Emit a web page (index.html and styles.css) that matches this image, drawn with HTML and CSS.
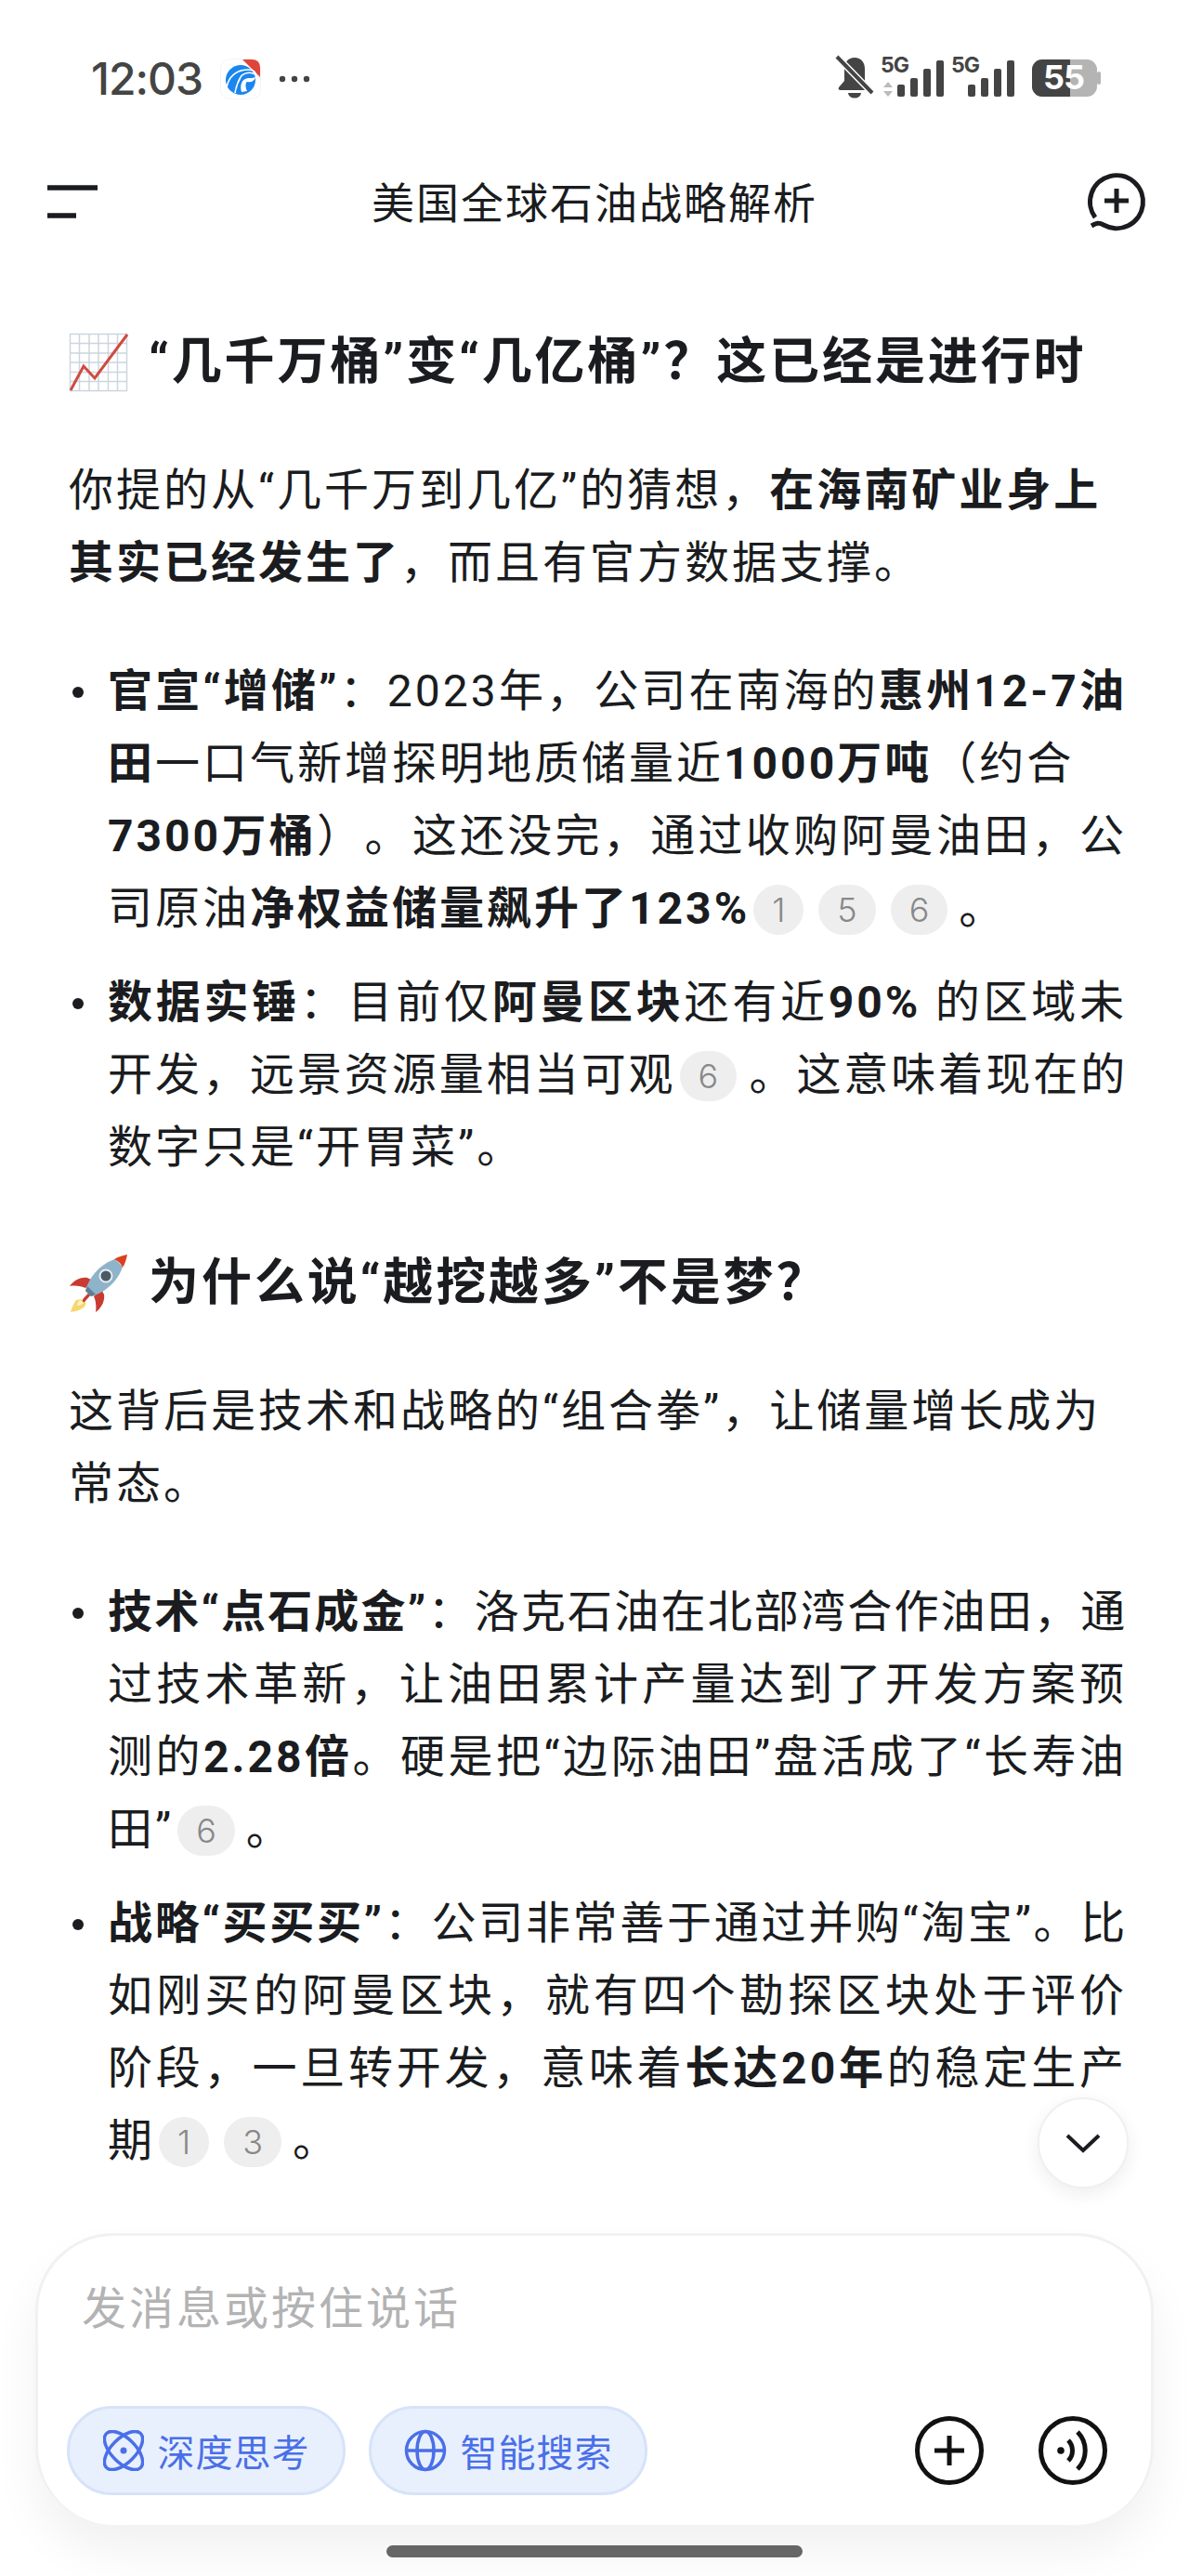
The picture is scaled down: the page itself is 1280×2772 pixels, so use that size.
FILE: index.html
```html
<!DOCTYPE html>
<html lang="zh-CN">
<head>
<meta charset="utf-8">
<title>美国全球石油战略解析</title>
<link rel="stylesheet" href="styles.css">
</head>
<body>
<div class="app">
  <div class="status">
    <div class="status-left">
      <span class="time">12:03</span>
      <svg class="app-logo" width="44" height="44" viewBox="0 0 44 44">
        <rect x="0.5" y="0.5" width="43" height="43" rx="10" fill="#fff" stroke="#f4f4f4"/>
        <path d="M24 1h10q9 0 9 9v10z" fill="#e0453a"/>
        <circle cx="22" cy="23" r="16" fill="#1a86ee"/>
        <path d="M7 31C9 20 17 12 30 12c5 0 8 2 8 5-5-3-13-2-16 3-3 5-5 11-6 17" fill="none" stroke="#fff" stroke-width="1.6"/>
        <path d="M23 36c-2-7 0-14 7-15 3 0 6 0 8-1-1 4-4 6-9 5-2 1-2 6 0 10z" fill="#fff"/>
      </svg>
      <svg class="dots" width="34" height="8" viewBox="0 0 34 8"><circle cx="4" cy="4" r="3.2"/><circle cx="17" cy="4" r="3.2"/><circle cx="30" cy="4" r="3.2"/></svg>
    </div>
    <svg class="status-right" width="300" height="64" viewBox="900 50 300 64">
      <path d="M921 62c-7 0-11 5-11 12v13l-6 7c-1 2 0 3 2 3h30c2 0 3-1 2-3l-6-7V74c0-7-4-12-11-12z" fill="#444"/>
      <path d="M914 100a7 5.500 0 0 0 14 0z" fill="#444"/>
      <path d="M902 61l37 38" stroke="#fff" stroke-width="7"/>
      <path d="M902 61l38 39" stroke="#444" stroke-width="4"/>
      <text x="949" y="78" class="sig">5G</text>
      <path d="M957 88l5 6h-10zM957 104l5-6h-10z" fill="#bbb"/>
      <g fill="#444">
        <rect x="967" y="91" width="8" height="13" rx="2"/><rect x="981" y="84" width="8" height="20" rx="2"/><rect x="995" y="74" width="8" height="30" rx="2"/><rect x="1009" y="65" width="8" height="39" rx="2"/>
        <rect x="1043" y="91" width="8" height="13" rx="2"/><rect x="1057" y="84" width="8" height="20" rx="2"/><rect x="1071" y="74" width="8" height="30" rx="2"/><rect x="1085" y="65" width="8" height="39" rx="2"/>
      </g>
      <text x="1025" y="78" class="sig">5G</text>
      <rect x="1182" y="77" width="4" height="14" rx="2" fill="#b4b4b4"/>
      <rect x="1112" y="64" width="70" height="40" rx="11" fill="#b4b4b4"/>
      <path d="M1153 64h-30a11 11 0 0 0-11 11v18a11 11 0 0 0 11 11h30z" fill="#444"/>
      <text x="1146" y="96" class="batt">55</text>
    </svg>
  </div>

  <header class="topbar">
    <svg width="56" height="40" viewBox="0 0 56 40" class="ic-menu"><path d="M1 5h54M1 35h31" stroke="#1a1c20" stroke-width="5.500"/></svg>
    <h1>美国全球石油战略解析</h1>
    <svg width="64" height="66" viewBox="0 0 64 66" class="ic-new"><path d="M9 50A28.500 28.500 0 1 1 18 58c-5-3-8-2-13 1" fill="none" stroke="#1a1c20" stroke-width="5"/><path d="M32 19v26M19 32h26" stroke="#1a1c20" stroke-width="5"/></svg>
  </header>

  <main class="content">
    <h2 class="h-first"><svg class="emoji" width="64" height="64" viewBox="0 0 64 64">
      <rect width="62" height="62" x="1" y="1" fill="#fff"/>
      <path d="M1.500 1.500h61v61h-61zM11.500 1.500v61M22 1.500v61M32 1.500v61M42.500 1.500v61M52.500 1.500v61M1.500 11.500h61M1.500 22h61M1.500 32h61M1.500 42.500h61M1.500 52.500h61" fill="none" stroke="#ccd6dd" stroke-width="1.500"/>
      <path d="M2 62l14-26 12 13L63 2" fill="none" stroke="#cf4b3f" stroke-width="3"/></svg>“几千万桶”变“几亿桶”？这已经是进行时</h2>
    <p class="para">你提的从“几千万到几亿”的猜想，<b>在海南矿业身上<br>其实已经发生了</b>，而且有官方数据支撑。</p>
    <ul class="list">
      <li><span class="ln"><b>官宣“增储”</b>：2023年，公司在南海的<b>惠州12-7油</b></span><span class="row"><b>田</b>一口气新增探明地质储量近<b>1000万吨</b>（约合</span><span class="ln"><b>7300万桶</b>）。这还没完，通过收购阿曼油田，公</span>司原油<b>净权益储量飙升了123%</b><span class="cite">1</span><span class="cite">5</span><span class="cite">6</span><span class="end">。</span></li>
      <li><span class="ln"><b>数据实锤</b>：目前仅<b>阿曼区块</b>还有近<b>90%</b> 的区域未</span><span class="ln tight">开发，远景资源量相当可观<span class="cite">6</span><span class="end">。</span>这意味着现在的</span>数字只是“开胃菜”。</li>
    </ul>
    <h2 class="h-second"><svg class="emoji" width="64" height="64" viewBox="0 0 64 64">
      <path d="M8 50c-3 4-5 9-6 13 5-1 11-2 15-6 3-4 1-10-9-7z" fill="#f5d76e"/>
      <path d="M12 50c-2 2-3 4-3 6 3 0 5-1 7-3z" fill="#fff3c4"/>
      <path d="M20 26C14 25 6 28 1 35c6-1 13 0 17 2l8-8z" fill="#c93a30"/>
      <path d="M38 44c1 6-2 14-9 19 1-6 0-13-2-17l8-8z" fill="#c93a30"/>
      <path d="M16 48l14-15 2 2-15 17c-2 1-3-2-1-4z" fill="#c93a30"/>
      <path d="M18 40C22 24 36 10 50 6l8 8c-4 14-18 28-34 32z" fill="#8fb3c9"/>
      <path d="M18 40l6 6 5-2-9-9z" fill="#5f7f94"/>
      <path d="M49 6c5-3 10-4 14-5-1 5-2 9-5 14-2-5-5-7-9-9z" fill="#d9401f"/>
      <circle cx="40" cy="24" r="6.500" fill="#4a5a66" stroke="#e6eef3" stroke-width="2"/>
    </svg>为什么说“越挖越多”不是梦？</h2>
    <p class="para">这背后是技术和战略的“组合拳”，让储量增长成为<br>常态。</p>
    <ul class="list">
      <li><span class="ln tight"><b>技术“点石成金”</b>：洛克石油在北部湾合作油田，通</span><span class="ln">过技术革新，让油田累计产量达到了开发方案预</span><span class="ln">测的<b>2.28倍</b>。硬是把“边际油田”盘活成了“长寿油</span>田”<span class="cite">6</span><span class="end">。</span></li>
      <li><span class="ln tight"><b>战略“买买买”</b>：公司非常善于通过并购“淘宝”。比</span><span class="ln">如刚买的阿曼区块，就有四个勘探区块处于评价</span><span class="ln">阶段，一旦转开发，意味着<b>长达20年</b>的稳定生产</span>期<span class="cite">1</span><span class="cite">3</span><span class="end">。</span></li>
    </ul>
    <button class="scroll-down"><svg width="38" height="22" viewBox="0 0 38 22"><path d="M2 3l17 16L36 3" fill="none" stroke="#1a1c20" stroke-width="4"/></svg></button>
  </main>

  <section class="composer">
    <div class="placeholder">发消息或按住说话</div>
    <div class="tools">
      <span class="pill"><svg width="44" height="44" viewBox="0 0 44 44"><g fill="none" stroke="#4a6fe8" stroke-width="3.500"><ellipse cx="22" cy="22" rx="26" ry="13" transform="rotate(45 22 22)"/><ellipse cx="22" cy="22" rx="26" ry="13" transform="rotate(-45 22 22)"/></g><circle cx="22" cy="22" r="3.500" fill="#4a6fe8"/></svg>深度思考</span>
      <span class="pill"><svg width="46" height="46" viewBox="0 0 46 46"><g fill="none" stroke="#4a6fe8" stroke-width="3.500"><circle cx="23" cy="23" r="20.500"/><ellipse cx="23" cy="23" rx="9" ry="20.500"/><path d="M3 23h40"/></g></svg>智能搜索</span>
      <span class="grow"></span>
      <svg class="tool-ic" width="74" height="74" viewBox="0 0 74 74"><circle cx="37" cy="37" r="34.500" fill="none" stroke="#111" stroke-width="5"/><path d="M37 21v32M21 37h32" stroke="#111" stroke-width="5"/></svg>
      <svg class="tool-ic" width="74" height="74" viewBox="0 0 74 74"><circle cx="37" cy="37" r="34.500" fill="none" stroke="#111" stroke-width="5"/><circle cx="24" cy="37" r="3.800" fill="#111"/><path d="M32 26c6 6 6 16 0 22M42 17c11 11 11 29 0 40" fill="none" stroke="#111" stroke-width="5"/></svg>
    </div>
  </section>
  <div class="gesture"><span></span></div>
</div>
</body>
</html>
```

FILE: styles.css
```css
* { box-sizing: border-box; }
html, body { margin: 0; padding: 0; background: #fff; }
body { font-family: Roboto, "Noto Sans CJK SC", sans-serif; color: #1a1c20; text-spacing-trim: space-all; }
.app { width: 1280px; height: 2772px; display: flex; flex-direction: column; overflow: hidden; position: relative; background: #fff; }

.status { height: 168px; padding: 0 93px 0 98px; display: flex; justify-content: space-between; align-items: flex-start; flex: none; }
.status-left { display: flex; align-items: center; height: 44px; margin-top: 63px; }
.time { font-family: Inter, Roboto, sans-serif; font-weight: 500; font-size: 48px; color: #444; line-height: 44px; letter-spacing: -1px; }
.app-logo { margin-left: 19px; }
.dots { margin-left: 19px; fill: #444; }
.status-right { margin-top: 50px; margin-right: -12px; }
.sig { font: 700 23px Inter, Roboto, sans-serif; fill: #444; letter-spacing: -1px; }
.batt { font: 700 36px Inter, Roboto, sans-serif; fill: #fff; text-anchor: middle; letter-spacing: -1px; }

.topbar { height: 100px; flex: none; padding: 0 46px 0 50px; display: flex; justify-content: space-between; align-items: center; margin-top: -1px; }
.topbar h1 { margin: 0 0 0 4px; font-size: 46px; font-weight: 400; letter-spacing: 2px; font-family: "Noto Sans CJK SC", sans-serif; line-height: 60px; position: relative; top: -2px; }

.content { flex: 1; min-height: 0; padding: 84px 0 0 74px; position: relative; }
h2 { margin: 0; font-size: 54px; line-height: 78px; font-weight: 700; letter-spacing: 2.900px; display: flex; align-items: center; white-space: nowrap; }
.emoji { margin-right: 22px; flex: none; }
.h-second { margin-top: 68px; }
.para { margin: 60px 0 0; font-size: 48px; line-height: 78px; letter-spacing: 3px; white-space: nowrap; }
.list { margin: 60px 0 0; padding: 0; list-style: none; display: flex; flex-direction: column; gap: 23px; }
.list li { font-size: 48px; line-height: 78px; letter-spacing: 3px; padding-left: 42px; position: relative; width: 1139px; }
.list li::before { content: ""; position: absolute; left: 4px; top: 34px; width: 12px; height: 12px; border-radius: 50%; background: #1a1c20; }
.row { display: block; white-space: nowrap; }
.ln { display: block; text-align: justify; text-align-last: justify; }
.tight { letter-spacing: 1.800px; }
b { font-weight: 700; }
.cite { display: inline-flex; align-items: center; justify-content: center; height: 54px; padding: 0 20px; margin: 0 16px 0 4px; border-radius: 27px; background: #eee; color: #888; font-family: Inter, Roboto, sans-serif; font-size: 36px; font-weight: 300; letter-spacing: 0; line-height: 54px; vertical-align: 2px; }
.cite + .cite { margin-left: 0; }
.end { margin-left: -4px; }
.scroll-down { position: absolute; right: 65px; bottom: 48px; width: 98px; height: 98px; border-radius: 50%; border: 2px solid #f0f0f0; background: #fff; box-shadow: 0 6px 20px rgba(0,0,0,.07); display: flex; align-items: center; justify-content: center; padding: 0; }

.composer { flex: none; width: 1204px; height: 314px; margin: 0 38px; border: 3px solid #f1f1f1; border-bottom-width: 0; border-radius: 84px; background: #fff; box-shadow: 0 28px 50px rgba(0,0,0,.06); padding: 41px 47px 32px 31px; display: flex; flex-direction: column; justify-content: space-between; position: relative; z-index: 1; }
.placeholder { font-size: 48px; line-height: 66px; color: #b3b3b3; padding-left: 16px; letter-spacing: 3px; font-family: "Noto Sans CJK SC", sans-serif; }
.tools { display: flex; align-items: center; gap: 25px; }
.grow { flex: 1; }
.pill { display: flex; align-items: center; justify-content: center; gap: 15px; width: 300px; height: 96px; border-radius: 48px; background: #e8f0fd; border: 3px solid #d6e3f9; color: #4a6fe8; font-size: 40px; letter-spacing: 1px; font-family: "Noto Sans CJK SC", sans-serif; }
.tool-ic { margin-left: 34px; }
.gesture { flex: none; height: 55px; background: #fff; display: flex; justify-content: center; padding-top: 22px; }
.gesture span { width: 448px; height: 13px; border-radius: 7px; background: #666; position: relative; z-index: 2; }
```
